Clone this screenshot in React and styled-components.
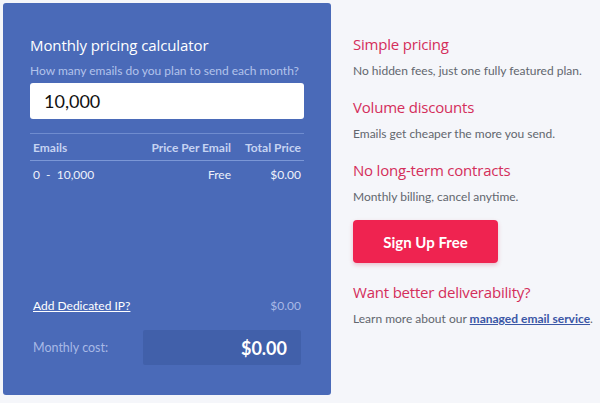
import React from 'react';
import styled, { createGlobalStyle } from 'styled-components';

const GlobalStyle = createGlobalStyle`
  html, body {
    margin: 0;
    padding: 0;
    background: #f5f6fa;
  }
  body {
    font-family: 'Lato', 'Liberation Sans', sans-serif;
  }
`;

const Page = styled.div`
  display: flex;
  gap: 22px;
  padding: 3px;
  width: 600px;
  height: 403px;
  box-sizing: border-box;
`;

const Panel = styled.div`
  width: 328px;
  height: 392px;
  box-sizing: border-box;
  background: #4a6ab8;
  border-radius: 3px;
  padding: 30px 27px 30px 27px;
  display: flex;
  flex-direction: column;
  color: #fff;
`;

const Title = styled.h2`
  margin: 0;
  font-family: 'Open Sans', sans-serif;
  font-weight: 400;
  font-size: 15px;
  line-height: 24px;
  letter-spacing: -0.1px;
`;

const Hint = styled.div`
  font-size: 12px;
  line-height: 16px;
  color: #b3c3eb;
  margin-top: 6px;
`;

const AmountInput = styled.input`
  margin-top: 4px;
  height: 36px;
  box-sizing: border-box;
  border: none;
  border-radius: 3px;
  padding: 0 14px;
  font-family: 'Lato', sans-serif;
  font-size: 18px;
  color: #111;
  outline: none;
`;

const Table = styled.div`
  margin-top: 14px;
  border-top: 1px solid #6f8ccf;
`;

const Row = styled.div`
  display: grid;
  grid-template-columns: 1fr 110px 70px;
  align-items: center;
  height: 26px;
  padding: 0 3px;
  font-size: 12px;
  color: ${(p) => (p.head ? '#c6d3f2' : '#eef2fb')};
  font-weight: ${(p) => (p.head ? 700 : 400)};
  border-bottom: ${(p) => (p.head ? '1px solid #7b97d6' : 'none')};
`;

const Cell = styled.span`
  text-align: ${(p) => (p.right ? 'right' : 'left')};
  white-space: nowrap;
`;

const Spacer = styled.div`
  flex: 1;
`;

const LineItem = styled.div`
  display: flex;
  justify-content: space-between;
  align-items: center;
  padding: 0 3px;
  font-size: 12px;
`;

const IpLink = styled.a`
  color: #fff;
  text-decoration: underline;
`;

const Muted = styled.span`
  color: #a8b9e6;
`;

const TotalRow = styled.div`
  display: flex;
  align-items: center;
  justify-content: space-between;
  margin-top: 17px;
  padding: 0 3px;
  font-size: 12.5px;
`;

const TotalBox = styled.div`
  width: 158px;
  height: 35px;
  box-sizing: border-box;
  background: #4160aa;
  border-radius: 2px;
  display: flex;
  align-items: center;
  justify-content: flex-end;
  padding-right: 14px;
  font-size: 18px;
  font-weight: 700;
  color: #fff;
`;

const Side = styled.div`
  padding-top: 30px;
  display: flex;
  flex-direction: column;
`;

const Heading = styled.h3`
  margin: 0;
  font-family: 'Open Sans', sans-serif;
  font-weight: 400;
  font-size: 15px;
  line-height: 22px;
  color: #d42e5a;
  letter-spacing: -0.2px;
`;

const Text = styled.p`
  margin: 8px 0 17px;
  font-size: 12px;
  line-height: 16px;
  color: #62666e;
`;

const SignUp = styled.button`
  align-self: flex-start;
  margin: -2px 0 18px;
  width: 145px;
  height: 43px;
  border: none;
  border-radius: 4px;
  background: #ef2350;
  color: #fff;
  font-family: 'Lato', sans-serif;
  font-size: 15px;
  font-weight: 700;
  box-shadow: 0 2px 4px rgba(200, 30, 70, 0.25);
  cursor: pointer;
`;

const ServiceLink = styled.a`
  color: #3b57a6;
  font-weight: 700;
  text-decoration: underline;
`;

const App = () => {
  return (
    <>
      <GlobalStyle />
      <Page>
        <Panel>
          <Title>Monthly pricing calculator</Title>
          <Hint>How many emails do you plan to send each month?</Hint>
          <AmountInput defaultValue="10,000" />
          <Table>
            <Row head>
              <Cell>Emails</Cell>
              <Cell right>Price Per Email</Cell>
              <Cell right>Total Price</Cell>
            </Row>
            <Row>
              <Cell>0 &nbsp;- &nbsp;10,000</Cell>
              <Cell right>Free</Cell>
              <Cell right>$0.00</Cell>
            </Row>
          </Table>
          <Spacer />
          <LineItem>
            <IpLink href="#">Add Dedicated IP?</IpLink>
            <Muted>$0.00</Muted>
          </LineItem>
          <TotalRow>
            <Muted>Monthly cost:</Muted>
            <TotalBox>$0.00</TotalBox>
          </TotalRow>
        </Panel>
        <Side>
          <Heading>Simple pricing</Heading>
          <Text>No hidden fees, just one fully featured plan.</Text>
          <Heading>Volume discounts</Heading>
          <Text>Emails get cheaper the more you send.</Text>
          <Heading>No long-term contracts</Heading>
          <Text>Monthly billing, cancel anytime.</Text>
          <SignUp>Sign Up Free</SignUp>
          <Heading>Want better deliverability?</Heading>
          <Text>
            Learn more about our <ServiceLink href="#">managed email service</ServiceLink>.
          </Text>
        </Side>
      </Page>
    </>
  );
};

export default App;
